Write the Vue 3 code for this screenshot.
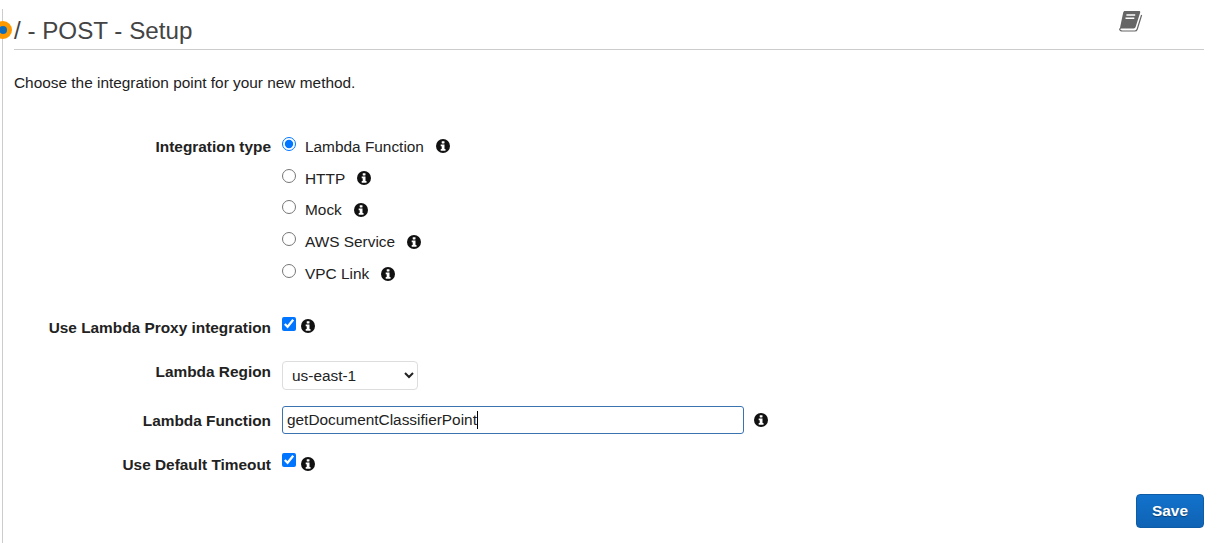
<script setup>
const types = [
  { name: 'Lambda Function', checked: true },
  { name: 'HTTP', checked: false },
  { name: 'Mock', checked: false },
  { name: 'AWS Service', checked: false },
  { name: 'VPC Link', checked: false }
]
</script>

<template>
  <div class="page">
    <span class="dot"></span>
    <header class="head">
      <h1 class="title">/ - POST - Setup</h1>
      <svg class="book" viewBox="0 0 24 22" width="24" height="22" aria-hidden="true">
        <path d="M5.8 1H20c1 0 1.4.6 1.2 1.4L16.6 17c-.3.9-.9 1.4-1.9 1.4H3.2c-1.1 0-2.2.2-2.5.9L4.2 2.6C4.5 1.5 5 1 5.8 1z" fill="#666"/>
        <path d="M22.6 5l-4.4 14.2c-.4 1.2-1.2 1.8-2.4 1.8H3.4C1.6 21 .4 20 .7 18.5" fill="none" stroke="#666" stroke-width="1.2"/>
        <path d="M7.4 5h8.8M6.5 8.2h8.8" stroke="#fff" stroke-width="1.6"/>
      </svg>
    </header>
    <p class="intro">Choose the integration point for your new method.</p>

    <form class="form" @submit.prevent>
      <div class="row row-types">
        <label class="label">Integration type</label>
        <div class="options">
          <div v-for="t in types" :key="t.name" class="option">
            <input class="radio" type="radio" name="type" :checked="t.checked" />
            <span class="opt-name">{{ t.name }}</span>
            <svg class="info" viewBox="0 0 14 14" aria-hidden="true">
              <circle cx="7" cy="7" r="7" fill="#111"/>
              <rect x="5.7" y="2.2" width="2.8" height="2.3" rx=".4" fill="#fff"/>
              <path d="M4.7 5.6h3.8v4.4h1v1.7H4.7V10h1V7.3h-1z" fill="#fff"/>
            </svg>
          </div>
        </div>
      </div>

      <div class="row row-proxy">
        <label class="label">Use Lambda Proxy integration</label>
        <div class="check-line">
          <input class="check" type="checkbox" checked />
          <svg class="info" viewBox="0 0 14 14" aria-hidden="true">
            <circle cx="7" cy="7" r="7" fill="#111"/>
            <rect x="5.7" y="2.2" width="2.8" height="2.3" rx=".4" fill="#fff"/>
            <path d="M4.7 5.6h3.8v4.4h1v1.7H4.7V10h1V7.3h-1z" fill="#fff"/>
          </svg>
        </div>
      </div>

      <div class="row row-region">
        <label class="label">Lambda Region</label>
        <select class="select">
          <option>us-east-1</option>
        </select>
      </div>

      <div class="row row-fn">
        <label class="label">Lambda Function</label>
        <div class="fn-line">
          <div class="input-wrap">
            <input class="input" type="text" value="getDocumentClassifierPoint" />
            <span class="caret"></span>
          </div>
          <svg class="info" viewBox="0 0 14 14" aria-hidden="true">
            <circle cx="7" cy="7" r="7" fill="#111"/>
            <rect x="5.7" y="2.2" width="2.8" height="2.3" rx=".4" fill="#fff"/>
            <path d="M4.7 5.6h3.8v4.4h1v1.7H4.7V10h1V7.3h-1z" fill="#fff"/>
          </svg>
        </div>
      </div>

      <div class="row row-timeout">
        <label class="label">Use Default Timeout</label>
        <div class="check-line">
          <input class="check" type="checkbox" checked />
          <svg class="info" viewBox="0 0 14 14" aria-hidden="true">
            <circle cx="7" cy="7" r="7" fill="#111"/>
            <rect x="5.7" y="2.2" width="2.8" height="2.3" rx=".4" fill="#fff"/>
            <path d="M4.7 5.6h3.8v4.4h1v1.7H4.7V10h1V7.3h-1z" fill="#fff"/>
          </svg>
        </div>
      </div>
    </form>

    <footer class="foot">
      <button class="save" type="button">Save</button>
    </footer>
  </div>
</template>

<style>
html, body { margin: 0; background: #fff; overflow: hidden; }
</style>

<style scoped>
.page {
  position: relative;
  box-sizing: border-box;
  width: 1219px;
  height: 534px;
  margin: 9px 0 0 2px;
  padding: 0 17px 15px 11px;
  border-left: 1px solid #ccc;
  display: flex;
  flex-direction: column;
  font-family: "Liberation Sans", Arial, sans-serif;
  font-size: 15.4px;
  color: #222;
}
.dot {
  position: absolute;
  left: -9px;
  top: 12px;
  width: 8px;
  height: 8px;
  border-radius: 50%;
  background: #0f6cbd;
  border: 5px solid #f90;
}
.head {
  position: relative;
  height: 40px;
  border-bottom: 1px solid #ccc;
  flex: none;
}
.title {
  margin: 0;
  font-size: 24.2px;
  font-weight: 400;
  line-height: 28px;
  padding-top: 8px;
  color: #444;
}
.book {
  position: absolute;
  right: 61px;
  top: 1px;
}
.intro {
  margin: 24px 0 0;
  line-height: 18px;
  color: #222;
}
.form {
  margin-top: 36px;
}
.row {
  display: grid;
  grid-template-columns: 257px 1fr;
  column-gap: 11px;
}
.label {
  text-align: right;
  font-weight: 700;
  line-height: 18px;
  color: #222;
}
.row-types .label { padding-top: 9.5px; }
.options { display: flex; flex-direction: column; padding-top: 2.5px; }
.option {
  display: flex;
  align-items: center;
  height: 31.8px;
}
.radio {
  width: 14px;
  height: 14px;
  margin: -5px 9px 0 0;
}
.opt-name { line-height: 18px; padding-top: 1px; }
.option .info { margin-left: 12px; }
.info {
  width: 14px;
  height: 14px;
  flex: none;
}
.row-proxy { margin-top: 28px; }
.row-proxy .label { padding-top: 1.5px; }
.check-line {
  display: flex;
  align-items: center;
  height: 18px;
}
.check {
  width: 14px;
  height: 14px;
  margin: -5px 5px 0 0;
}
.row-region { margin-top: 24px; }
.row-region .label { padding-top: 2px; }
.select {
  box-sizing: border-box;
  width: 136px;
  height: 29px;
  padding: 0 5px;
  font: 15.4px "Liberation Sans", Arial, sans-serif;
  color: #222;
  background: #fff;
  border: 1px solid #ddd;
  border-radius: 4px;
}
.row-fn { margin-top: 16px; }
.row-fn .label { padding-top: 6px; }
.fn-line {
  display: flex;
  align-items: center;
}
.input-wrap { position: relative; }
.input {
  box-sizing: border-box;
  display: block;
  width: 462px;
  height: 28px;
  padding: 0 4px;
  font: 15.4px "Liberation Sans", Arial, sans-serif;
  color: #222;
  background: #fff;
  border: 1px solid #3b73af;
  border-radius: 3px;
  outline: none;
}
.caret {
  position: absolute;
  left: 195px;
  top: 5px;
  width: 1px;
  height: 18px;
  background: #000;
}
.fn-line .info { margin-left: 10px; }
.row-timeout { margin-top: 21px; }
.row-timeout .label { padding-top: 1px; }
.row-timeout .check { margin-top: -7px; }
.foot {
  margin-top: auto;
  display: flex;
  justify-content: flex-end;
}
.save {
  box-sizing: border-box;
  width: 68px;
  height: 34px;
  padding: 0;
  font: 700 15.4px "Liberation Sans", Arial, sans-serif;
  color: #fff;
  text-shadow: 0 1px 1px rgba(0, 0, 0, .4);
  background: linear-gradient(#1272cc, #0f63b4);
  border: 1px solid #0e5ba6;
  border-radius: 4px;
}
</style>
